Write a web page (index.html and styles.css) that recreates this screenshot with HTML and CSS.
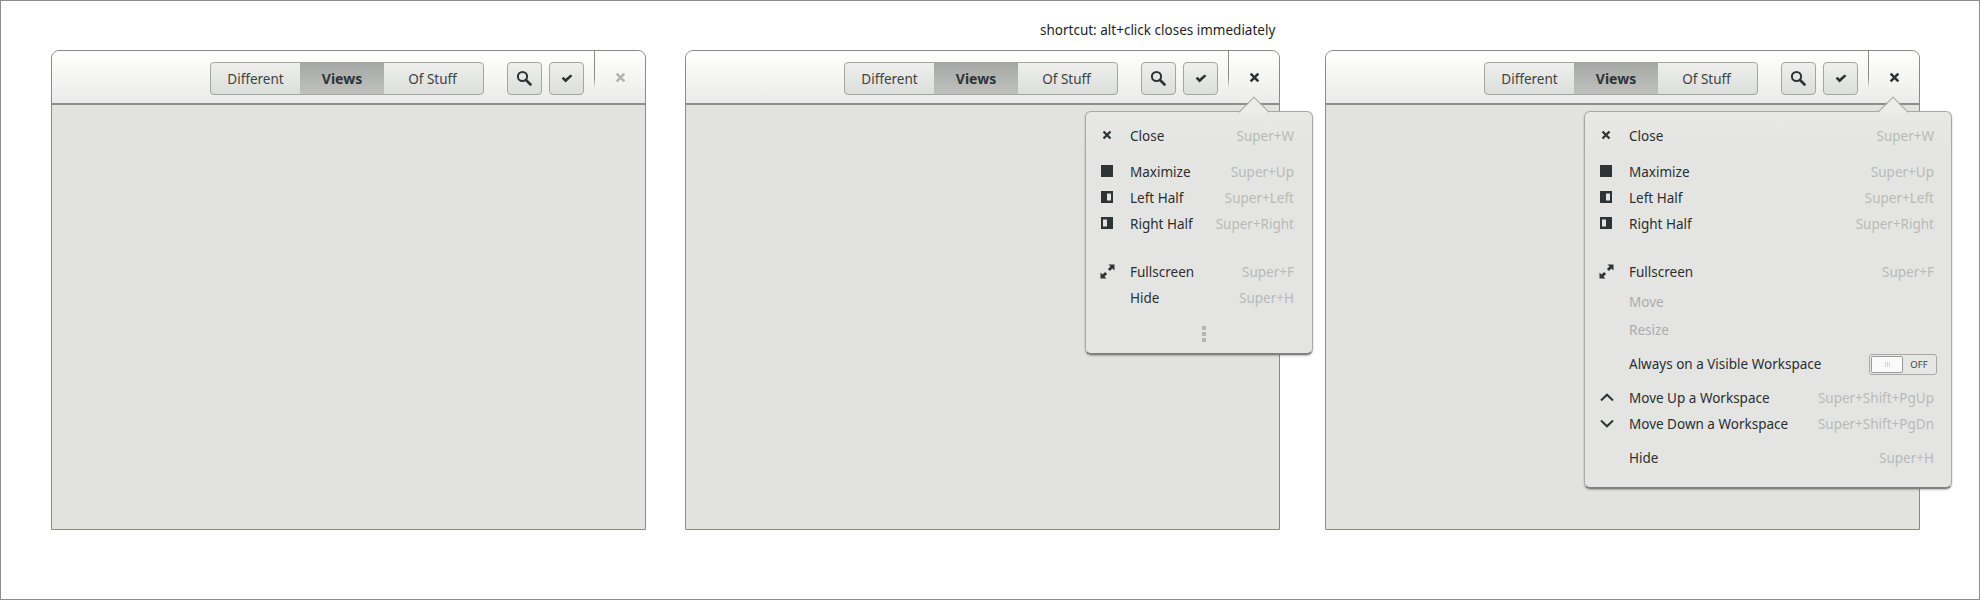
FILE: index.html
```html
<!DOCTYPE html>
<html lang="en">
<head>
<meta charset="utf-8">
<title>Window menu</title>
<link rel="stylesheet" href="styles.css">
</head>
<body>
<svg class="defs" width="0" height="0" aria-hidden="true">
  <symbol id="x" viewBox="0 0 10 10"><path d="M1.5 1.5 8.5 8.5M8.5 1.5 1.5 8.5" fill="none" stroke="currentColor" stroke-width="2.3"/></symbol>
  <symbol id="search" viewBox="0 0 16 16"><circle cx="6.5" cy="6.5" r="4.6" fill="none" stroke="currentColor" stroke-width="2"/><path d="M10 10 14.5 14.5" stroke="currentColor" stroke-width="2.6" stroke-linecap="round"/></symbol>
  <symbol id="check" viewBox="0 0 12 9"><path d="M.6 4.6 2.6 2.8 4.5 4.7 9.6.4 11.4 2 4.6 8.6Z" fill="currentColor"/></symbol>
  <symbol id="max" viewBox="0 0 12 12"><rect width="12" height="12" fill="currentColor"/></symbol>
  <symbol id="left" viewBox="0 0 12 12"><path d="M0 0H12V12H0ZM6 2.5V9.5H10V2.5Z" fill="currentColor" fill-rule="evenodd"/></symbol>
  <symbol id="right" viewBox="0 0 12 12"><path d="M0 0H12V12H0ZM2 2.5V9.5H6V2.5Z" fill="currentColor" fill-rule="evenodd"/></symbol>
  <symbol id="full" viewBox="0 0 15 15"><path d="M8.5 .5H14.5V6.5L12.5 4.5 9.9 7.1 7.9 5.1 10.5 2.5ZM6.5 14.5H.5V8.500L2.500 10.500 5.100 7.900 7.100 9.900 4.500 12.500Z" fill="currentColor"/></symbol>
  <symbol id="up" viewBox="0 0 14 9"><path d="M1 7.500 7 1.700 13 7.500" fill="none" stroke="currentColor" stroke-width="2"/></symbol>
  <symbol id="down" viewBox="0 0 14 9"><path d="M1 1.500 7 7.300 13 1.500" fill="none" stroke="currentColor" stroke-width="2"/></symbol>
</svg>

<main class="desktop">
  <p class="caption">shortcut: alt+click closes immediately</p>

  <section class="window win-a">
    <header class="titlebar">
      <div class="segmented">
        <span class="seg seg-different">Different</span>
        <span class="seg seg-views active">Views</span>
        <span class="seg seg-stuff">Of Stuff</span>
      </div>
      <span class="tool tool-search"><svg class="ico-search"><use href="#search"/></svg></span>
      <span class="tool tool-check"><svg class="ico-check"><use href="#check"/></svg></span>
      <span class="close dim"><svg class="ico-x"><use href="#x"/></svg></span>
    </header>
    <div class="content"></div>
  </section>

  <section class="window win-b">
    <header class="titlebar">
      <div class="segmented">
        <span class="seg seg-different">Different</span>
        <span class="seg seg-views active">Views</span>
        <span class="seg seg-stuff">Of Stuff</span>
      </div>
      <span class="tool tool-search"><svg class="ico-search"><use href="#search"/></svg></span>
      <span class="tool tool-check"><svg class="ico-check"><use href="#check"/></svg></span>
      <span class="close"><svg class="ico-x"><use href="#x"/></svg></span>
    </header>
    <div class="content"></div>
    <div class="menu menu-short">
      <span class="arrow"></span>
      <div class="row"><span class="icon"><svg class="ico-menu-x"><use href="#x"/></svg></span><span class="label">Close</span><span class="key">Super+W</span></div>
      <div class="row gap-s"><span class="icon"><svg class="ico-win"><use href="#max"/></svg></span><span class="label">Maximize</span><span class="key">Super+Up</span></div>
      <div class="row"><span class="icon"><svg class="ico-win"><use href="#left"/></svg></span><span class="label">Left Half</span><span class="key">Super+Left</span></div>
      <div class="row"><span class="icon"><svg class="ico-win"><use href="#right"/></svg></span><span class="label">Right Half</span><span class="key">Super+Right</span></div>
      <div class="row gap-l"><span class="icon"><svg class="ico-full"><use href="#full"/></svg></span><span class="label">Fullscreen</span><span class="key">Super+F</span></div>
      <div class="row"><span class="icon"></span><span class="label">Hide</span><span class="key">Super+H</span></div>
      <div class="more"><i></i><i></i><i></i></div>
    </div>
  </section>

  <section class="window win-c">
    <header class="titlebar">
      <div class="segmented">
        <span class="seg seg-different">Different</span>
        <span class="seg seg-views active">Views</span>
        <span class="seg seg-stuff">Of Stuff</span>
      </div>
      <span class="tool tool-search"><svg class="ico-search"><use href="#search"/></svg></span>
      <span class="tool tool-check"><svg class="ico-check"><use href="#check"/></svg></span>
      <span class="close"><svg class="ico-x"><use href="#x"/></svg></span>
    </header>
    <div class="content"></div>
    <div class="menu menu-long">
      <span class="arrow"></span>
      <div class="row"><span class="icon"><svg class="ico-menu-x"><use href="#x"/></svg></span><span class="label">Close</span><span class="key">Super+W</span></div>
      <div class="row gap-s"><span class="icon"><svg class="ico-win"><use href="#max"/></svg></span><span class="label">Maximize</span><span class="key">Super+Up</span></div>
      <div class="row"><span class="icon"><svg class="ico-win"><use href="#left"/></svg></span><span class="label">Left Half</span><span class="key">Super+Left</span></div>
      <div class="row"><span class="icon"><svg class="ico-win"><use href="#right"/></svg></span><span class="label">Right Half</span><span class="key">Super+Right</span></div>
      <div class="row gap-l"><span class="icon"><svg class="ico-full"><use href="#full"/></svg></span><span class="label">Fullscreen</span><span class="key">Super+F</span></div>
      <div class="row tall gap-xs disabled"><span class="icon"></span><span class="label">Move</span></div>
      <div class="row tall disabled"><span class="icon"></span><span class="label">Resize</span></div>
      <div class="row switch-row"><span class="icon"></span><span class="label">Always on a Visible Workspace</span>
        <span class="switch"><span class="thumb"><i></i><i></i><i></i></span><span class="off">OFF</span></span>
      </div>
      <div class="row gap-m"><span class="icon chev"><svg class="ico-chev"><use href="#up"/></svg></span><span class="label">Move Up a Workspace</span><span class="key">Super+Shift+PgUp</span></div>
      <div class="row"><span class="icon chev"><svg class="ico-chev"><use href="#down"/></svg></span><span class="label">Move Down a Workspace</span><span class="key">Super+Shift+PgDn</span></div>
      <div class="row gap-m"><span class="icon"></span><span class="label">Hide</span><span class="key">Super+H</span></div>
    </div>
  </section>
</main>
</body>
</html>
```

FILE: styles.css
```css
* { box-sizing: border-box; }
html, body { margin: 0; padding: 0; }
body {
  width: 1980px;
  height: 600px;
  overflow: hidden;
  background: #fff;
  color: #2e3436;
  font-family: "Noto Sans", "DejaVu Sans", sans-serif;
  font-size: 13.5px;
}
.defs { position: absolute; }

.desktop {
  position: relative;
  width: 1980px;
  height: 600px;
  border: 1px solid #8b8e8d;
}
.caption {
  position: absolute;
  left: 1039px;
  top: 20px;
  margin: 0;
  font-size: 13.5px;
  line-height: 18px;
  color: #1c1f1f;
}

/* Windows sit on a free canvas */
.window {
  position: absolute;
  top: 49px;
  width: 595px;
  height: 480px;
  display: flex;
  flex-direction: column;
  border: 1px solid #8a8a86;
  border-radius: 8px 8px 0 0;
  background: #e2e3de;
}
.win-a { left: 50px; }
.win-b { left: 684px; }
.win-c { left: 1324px; }

.titlebar {
  display: flex;
  align-items: flex-start;
  flex: 0 0 54px;
  padding: 11px 0 0 158px;
  border-bottom: 2px solid #8d8e8b;
  border-radius: 7px 7px 0 0;
  background: linear-gradient(#ffffff, #ebebe9);
}
.segmented {
  display: flex;
  width: 274px;
  height: 33px;
  border: 1px solid #a3a5a2;
  border-radius: 4px;
  overflow: hidden;
  background: linear-gradient(#eff0ee, #dcdedb);
}
.seg {
  display: flex;
  align-items: center;
  justify-content: center;
  color: #3c4243;
}
.seg-different { width: 89px; }
.seg-views { width: 84px; font-size: 14px; }
.seg-stuff { flex: 1; padding-right: 2px; }
.seg.active {
  font-weight: 700;
  background: linear-gradient(#a6a8a5, #c0c1bf);
  color: #2e3436;
}
.tool {
  display: flex;
  align-items: center;
  justify-content: center;
  width: 35px;
  height: 33px;
  border: 1px solid #a3a5a2;
  border-radius: 4px;
  background: linear-gradient(#eff0ee, #dcdedb);
}
.tool-search { margin-left: 23px; }
.tool-check { margin-left: 7px; }
.ico-search { width: 16px; height: 16px; margin: -1px 1px 0 0; }
.ico-check { width: 12px; height: 9px; }

.close {
  position: relative;
  display: flex;
  align-items: center;
  justify-content: center;
  flex: 1;
  height: 38px;
  margin: -11px 0 0 10px;
  padding: 14px 0 0 2px;
  background: linear-gradient(#8a8a86, #8a8a86 70%, rgba(138,138,134,0)) left top / 1px 100% no-repeat;
}
.close.dim { color: #b2b4b1; }
.ico-x { width: 11px; height: 11px; }

.content { flex: 1; }

/* Popover */
.menu {
  position: absolute;
  top: 60px;
  display: flex;
  flex-direction: column;
  padding-top: 11px;
  border: 1px solid #a8a9a7;
  border-bottom: 2px solid #80817f;
  border-radius: 6px;
  background: linear-gradient(#e8e8e6, #e4e5e3 40px);
  box-shadow: 0 1px 2px rgba(0,0,0,.25);
}
.menu-short { left: 399px; width: 228px; height: 244px; }
.menu-long { left: 258px; width: 368px; height: 378px; }
.arrow {
  position: absolute;
  top: -11px;
  width: 22px;
  height: 22px;
  transform: rotate(45deg);
  border-top: 1px solid #a8a9a7;
  border-left: 1px solid #a8a9a7;
  background: linear-gradient(135deg, #ececea 50%, transparent 50%);
}
.menu-short .arrow { left: 157px; }
.menu-long .arrow { left: 297px; }

.row {
  position: relative;
  display: flex;
  align-items: center;
  height: 26px;
  padding: 0 17px 0 15px;
}
.menu-short .row { padding-right: 18px; }
.row.tall { height: 28px; }
.gap-xs { margin-top: 3px; }
.gap-s { margin-top: 10px; }
.gap-m { margin-top: 8px; }
.gap-l { margin-top: 22px; }
.switch-row { height: 26px; margin-top: 7px; }
.icon {
  display: flex;
  align-items: center;
  flex: 0 0 29px;
  height: 26px;
  padding-bottom: 3px;
}
.icon.chev { padding-bottom: 1px; }
.label { flex: 1; white-space: nowrap; color: #2a2e2f; }
.key { white-space: nowrap; color: #b9bab8; }
.disabled .label { color: #aaacaa; }
.ico-menu-x { width: 10px; height: 10px; margin-left: 1px; }
.ico-win { width: 12px; height: 12px; }
.ico-full { width: 15px; height: 15px; margin: 2px 0 0 -1px; }
.ico-chev { width: 14px; height: 9px; }

.more {
  display: flex;
  flex-direction: column;
  align-items: center;
  gap: 2px;
  margin: 15px 0 0 10px;
}
.more i { width: 4px; height: 4px; background: #b5b6b4; }

.switch {
  position: relative;
  display: flex;
  align-items: center;
  width: 68px;
  height: 21px;
  margin-right: -3px;
  padding: 1px;
  border: 1px solid #a6a8a5;
  border-radius: 3px;
  background: #e6e7e5;
}
.thumb {
  display: flex;
  align-items: center;
  justify-content: center;
  gap: 1px;
  width: 32px;
  height: 17px;
  border: 1px solid #999b98;
  border-radius: 2px;
  background: #fafafa;
}
.thumb i { width: 1px; height: 5px; background: #d4d5d3; }
.off {
  flex: 1;
  text-align: center;
  font-size: 9.5px;
  color: #3c4243;
}
```
